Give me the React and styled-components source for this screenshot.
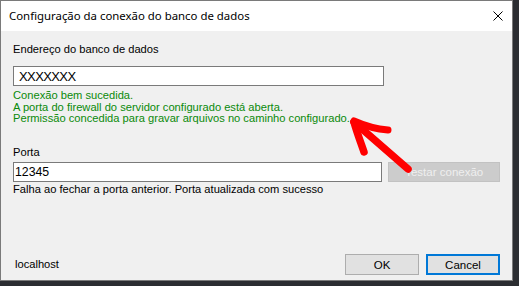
import React from "react";
import styled, { createGlobalStyle } from "styled-components";

const Global = createGlobalStyle`
  html, body { margin: 0; padding: 0; }
  body {
    width: 519px;
    height: 286px;
    background: #2b2d31;
    overflow: hidden;
    font-family: "Liberation Sans", Arial, sans-serif;
  }
`;

const Window = styled.div`
  position: relative;
  box-sizing: border-box;
  width: 513px;
  height: 281px;
  border: 1px solid #7a7a7a;
  background: #f0f0f0;
  display: flex;
  flex-direction: column;
`;

const TitleBar = styled.div`
  height: 30px;
  background: #ffffff;
  display: flex;
  align-items: center;
  justify-content: space-between;
  padding: 0 8px 0 8px;
  flex-shrink: 0;
`;

const Title = styled.span`
  font-family: "Noto Sans", "Open Sans", sans-serif;
  font-size: 11.4px;
  color: #000;
  margin-top: -1px;
`;

const CloseBtn = styled.div`
  width: 10px;
  height: 10px;
  margin-right: 1px;
  display: flex;
  svg { display: block; }
`;

const Content = styled.div`
  flex: 1;
  display: flex;
  flex-direction: column;
  padding: 12px 12px 5px 12px;
`;

const Label = styled.div`
  font-size: 11.15px;
  line-height: 13px;
  color: #000;
  margin-top: ${(p) => p.$mt || 0}px;
`;

const TextBox = styled.div`
  box-sizing: border-box;
  width: 371px;
  height: 20px;
  border: 1px solid #7a7a7a;
  background: #fff;
  display: flex;
  align-items: center;
  padding-left: ${(p) => p.$pad}px;
  font-size: ${(p) => p.$fs}px;
  letter-spacing: ${(p) => p.$ls || 0}px;
  color: #000;
  margin-top: ${(p) => p.$mt || 0}px;
`;

const Status = styled.div`
  margin-top: 4px;
  font-size: 11.15px;
  line-height: 11.5px;
  color: #0a8a0a;
`;

const Row = styled.div`
  display: flex;
  gap: 6px;
  margin-top: 3px;
`;

const DisabledButton = styled.div`
  box-sizing: border-box;
  width: 112px;
  height: 20px;
  background: #cccccc;
  border: 1px solid #c2c2c2;
  color: #efefef;
  font-size: 11.5px;
  display: flex;
  align-items: center;
  justify-content: center;
`;

const Message = styled.div`
  margin-top: 1px;
  font-size: 11.15px;
  line-height: 13px;
  color: #000;
`;

const Footer = styled.div`
  margin-top: auto;
  display: flex;
  align-items: center;
`;

const Host = styled.div`
  font-size: 11.15px;
  line-height: 13px;
  color: #000;
  margin-left: 2px;
  flex: 1;
`;

const Button = styled.div`
  box-sizing: border-box;
  width: 74px;
  height: 21px;
  background: #e1e1e1;
  border: ${(p) => (p.$focus ? "2px solid #0078d7" : "1px solid #adadad")};
  color: #000;
  font-size: 11.5px;
  display: flex;
  align-items: center;
  justify-content: center;
  margin-left: ${(p) => p.$ml || 0}px;
`;

const ArrowOverlay = styled.svg`
  position: absolute;
  left: 0;
  top: 0;
  pointer-events: none;
`;

export default function App() {
  return (
    <>
      <Global />
      <Window>
        <TitleBar>
          <Title>Configuração da conexão do banco de dados</Title>
          <CloseBtn>
            <svg width="10" height="10" viewBox="0 0 10 10">
              <path d="M0.5 0.5 L9.5 9.5 M9.5 0.5 L0.5 9.5" stroke="#000" strokeWidth="1" fill="none" />
            </svg>
          </CloseBtn>
        </TitleBar>
        <Content>
          <Label>Endereço do banco de dados</Label>
          <TextBox $mt={10} $pad={5} $fs={13} $ls={-0.6}>XXXXXXX</TextBox>
          <Status>
            <div>Conexão bem sucedida.</div>
            <div>A porta do firewall do servidor configurado está aberta.</div>
            <div>Permissão concedida para gravar arquivos no caminho configurado.</div>
          </Status>
          <Label $mt={21}>Porta</Label>
          <Row>
            <TextBox $pad={1} $fs={12.3}>12345</TextBox>
            <DisabledButton>Testar conexão</DisabledButton>
          </Row>
          <Message>Falha ao fechar a porta anterior. Porta atualizada com sucesso</Message>
          <Footer>
            <Host>localhost</Host>
            <Button>OK</Button>
            <Button $ml={7} $focus>Cancel</Button>
          </Footer>
        </Content>
        <ArrowOverlay width="513" height="281" viewBox="0 0 513 281">
          <g stroke="#ff0000" strokeLinecap="round" strokeLinejoin="round" fill="none">
            <path d="M353 121 L407 168" strokeWidth="7.5" />
            <path d="M353 120 C362 124 374 128 387 129" strokeWidth="7" />
            <path d="M353 121 C356 132 360 142 363 151" strokeWidth="7.5" />
          </g>
        </ArrowOverlay>
      </Window>
    </>
  );
}
